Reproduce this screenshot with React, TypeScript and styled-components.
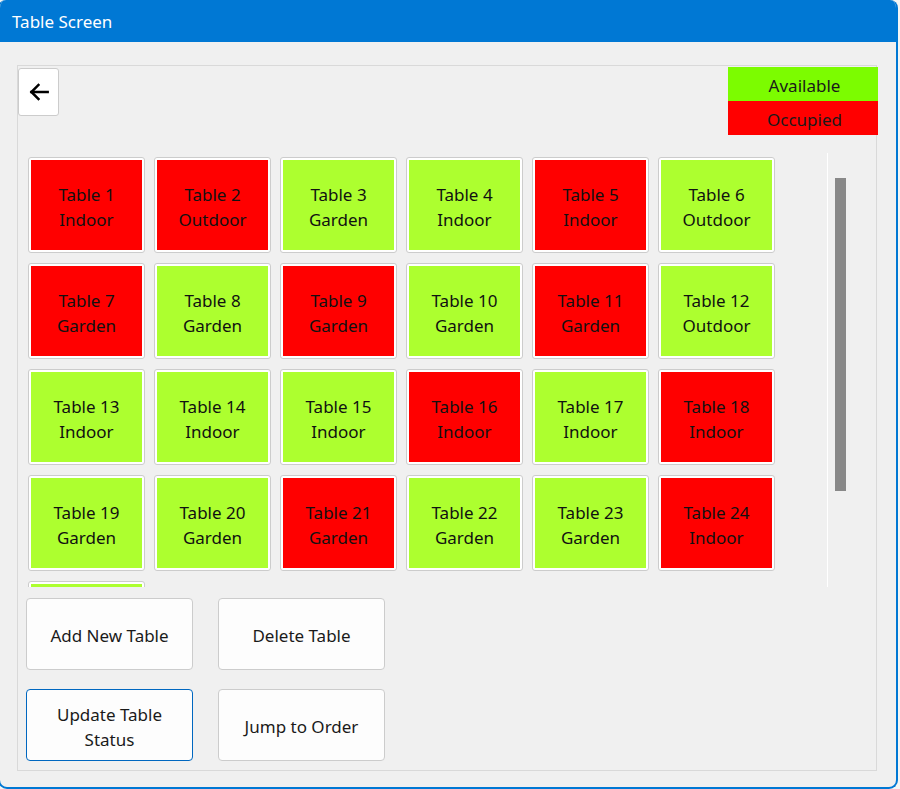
import React from "react";
import styled, { createGlobalStyle } from "styled-components";

const GlobalStyle = createGlobalStyle`
  html, body {
    margin: 0;
    padding: 0;
    background: #ffffff;
    overflow: hidden;
  }
  body {
    font-family: "Noto Sans", "Open Sans", sans-serif;
  }
  * { box-sizing: border-box; }
`;

const Page = styled.div`
  width: 900px;
  height: 789px;
  overflow: hidden;
  background: #f4f6f4;
`;

const Window = styled.div`
  margin-left: -2px;
  width: 900px;
  height: 789px;
  display: flex;
  flex-direction: column;
  border: 2px solid #0078d4;
  border-top: none;
  border-radius: 8px 8px 9px 9px;
  overflow: hidden;
  background: #f0f0f0;
`;

const TitleBar = styled.div`
  height: 42px;
  flex: none;
  background: #0078d4;
  color: #ffffff;
  font-size: 17px;
  display: flex;
  align-items: center;
  padding-left: 12px;
`;

const Body = styled.div`
  flex: 1;
  padding: 23px 19px 16px 17px;
  display: flex;
`;

const Panel = styled.div`
  flex: 1;
  border: 1px solid #d9d9d9;
  display: flex;
  flex-direction: column;
`;

const Header = styled.div`
  height: 69px;
  padding-top: 1px;
  display: flex;
  justify-content: space-between;
  align-items: flex-start;
`;

const BackButton = styled.button`
  margin-top: 1px;
  width: 41px;
  height: 48px;
  padding: 0;
  background: #ffffff;
  border: 1px solid #cccccc;
  border-radius: 3px;
  display: flex;
  align-items: center;
  justify-content: center;
`;

const Legend = styled.div`
  width: 150px;
  margin-right: -2px;
  display: flex;
  flex-direction: column;
`;

const LegendItem = styled.div<{ $color: string }>`
  height: 34px;
  background: ${(p) => p.$color};
  color: #1a1a1a;
  font-size: 17px;
  display: flex;
  align-items: center;
  justify-content: center;
  padding: 2px 0 0 3px;
`;

const GridArea = styled.div`
  margin-top: 17px;
  height: 435px;
  display: flex;
`;

const GridViewport = styled.div`
  width: 809px;
  overflow: hidden;
  padding: 5px 0 0 10px;
`;

const TileGrid = styled.div`
  display: grid;
  grid-template-columns: repeat(6, 117px);
  grid-auto-rows: 96px;
  column-gap: 9px;
  row-gap: 10px;
`;

const Tile = styled.button`
  padding: 2px;
  margin: 0;
  background: #ffffff;
  border: 1px solid #cccccc;
  border-radius: 3px;
  display: flex;
  font-family: inherit;
`;

const TileFill = styled.span<{ $occupied: boolean }>`
  flex: 1;
  background: ${(p) => (p.$occupied ? "#ff0000" : "#adff2f")};
  color: #111111;
  font-size: 17px;
  line-height: 25px;
  display: flex;
  flex-direction: column;
  align-items: center;
  justify-content: center;
  padding-top: 3px;
`;

const ScrollTrack = styled.div`
  margin-top: 1px;
  width: 21px;
  border-left: 1px solid #ffffff;
  padding-left: 7px;
`;

const ScrollThumb = styled.div`
  margin-top: 25px;
  width: 11px;
  height: 313px;
  background: #888888;
`;

const ButtonGrid = styled.div`
  margin-top: 11px;
  padding-left: 8px;
  display: grid;
  grid-template-columns: 167px 167px;
  grid-auto-rows: 72px;
  column-gap: 25px;
  row-gap: 19px;
`;

const ActionButton = styled.button<{ $focused?: boolean }>`
  background: #fdfdfd;
  border: 1px solid ${(p) => (p.$focused ? "#0067c0" : "#cccccc")};
  border-radius: 4px;
  font-family: inherit;
  font-size: 17px;
  line-height: 25px;
  color: #1a1a1a;
  padding: 3px 10px 0;
  display: flex;
  flex-direction: column;
  align-items: center;
  justify-content: center;
  white-space: nowrap;
`;

const tables: { n: number; occ: boolean; area: string }[] = [
  { n: 1, occ: true, area: "Indoor" },
  { n: 2, occ: true, area: "Outdoor" },
  { n: 3, occ: false, area: "Garden" },
  { n: 4, occ: false, area: "Indoor" },
  { n: 5, occ: true, area: "Indoor" },
  { n: 6, occ: false, area: "Outdoor" },
  { n: 7, occ: true, area: "Garden" },
  { n: 8, occ: false, area: "Garden" },
  { n: 9, occ: true, area: "Garden" },
  { n: 10, occ: false, area: "Garden" },
  { n: 11, occ: true, area: "Garden" },
  { n: 12, occ: false, area: "Outdoor" },
  { n: 13, occ: false, area: "Indoor" },
  { n: 14, occ: false, area: "Indoor" },
  { n: 15, occ: false, area: "Indoor" },
  { n: 16, occ: true, area: "Indoor" },
  { n: 17, occ: false, area: "Indoor" },
  { n: 18, occ: true, area: "Indoor" },
  { n: 19, occ: false, area: "Garden" },
  { n: 20, occ: false, area: "Garden" },
  { n: 21, occ: true, area: "Garden" },
  { n: 22, occ: false, area: "Garden" },
  { n: 23, occ: false, area: "Garden" },
  { n: 24, occ: true, area: "Indoor" },
  { n: 25, occ: false, area: "Indoor" },
];

const ArrowLeftIcon = () => (
  <svg width="26" height="26" viewBox="0 0 24 24" fill="none" stroke="#000" strokeWidth="2.3" strokeLinecap="square">
    <path d="M20 12H5" />
    <path d="M11.5 5.5L5 12l6.5 6.5" />
  </svg>
);

export default function App() {
  return (
    <Page>
      <GlobalStyle />
      <Window>
        <TitleBar>Table Screen</TitleBar>
        <Body>
          <Panel>
            <Header>
              <BackButton aria-label="Back">
                <ArrowLeftIcon />
              </BackButton>
              <Legend>
                <LegendItem $color="#7cfc00">Available</LegendItem>
                <LegendItem $color="#ff0000">Occupied</LegendItem>
              </Legend>
            </Header>
            <GridArea>
              <GridViewport>
                <TileGrid>
                  {tables.map((t) => (
                    <Tile key={t.n}>
                      <TileFill $occupied={t.occ}>
                        <span>Table {t.n}</span>
                        <span>{t.area}</span>
                      </TileFill>
                    </Tile>
                  ))}
                </TileGrid>
              </GridViewport>
              <ScrollTrack>
                <ScrollThumb />
              </ScrollTrack>
            </GridArea>
            <ButtonGrid>
              <ActionButton>Add New Table</ActionButton>
              <ActionButton>Delete Table</ActionButton>
              <ActionButton $focused>
                <span>Update Table</span>
                <span>Status</span>
              </ActionButton>
              <ActionButton>Jump to Order</ActionButton>
            </ButtonGrid>
          </Panel>
        </Body>
      </Window>
    </Page>
  );
}
